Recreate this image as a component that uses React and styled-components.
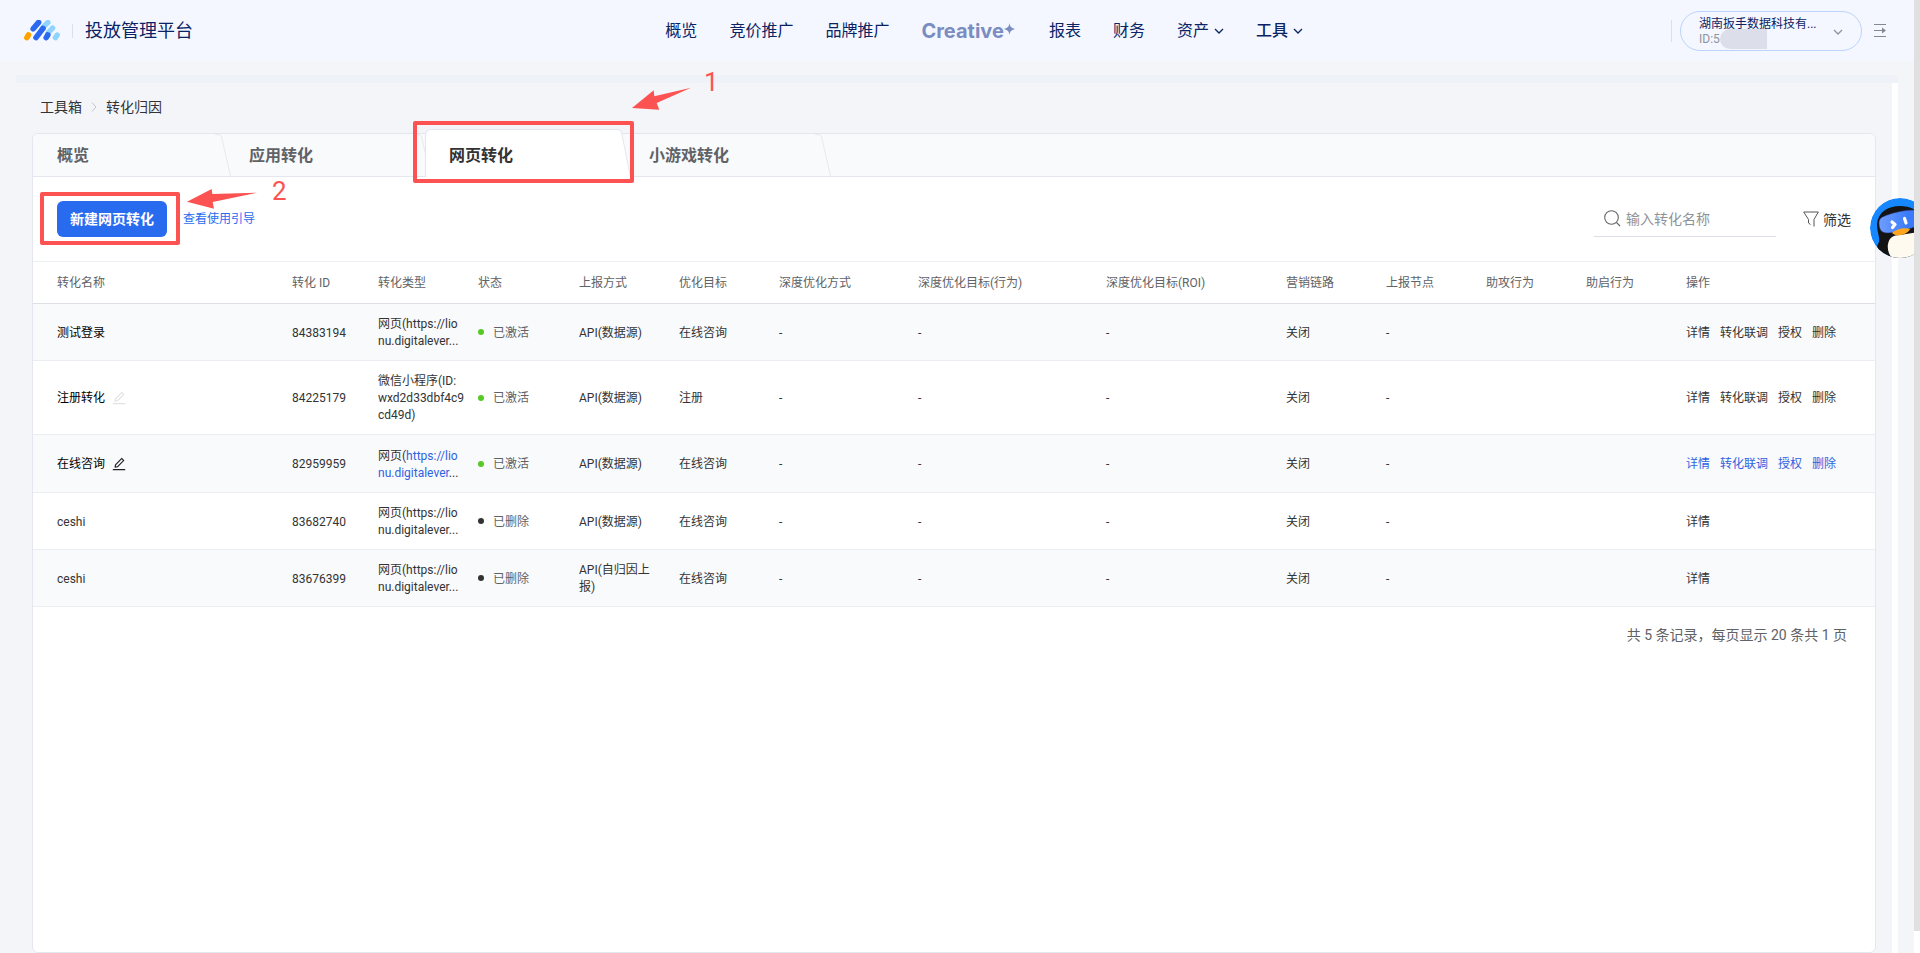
import React from "react";
import styled, { createGlobalStyle, css } from "styled-components";
import { AiOutlineEdit } from "react-icons/ai";

const GlobalStyle = createGlobalStyle`
  * {
    box-sizing: border-box;
  }

  body {
    margin: 0;
    background: #f4f5f8;
    color: #333;
    font-family: Roboto, "Noto Sans CJK SC", sans-serif;
    font-size: 12px;
    line-height: 17px;
  }

  button,
  input {
    font-family: inherit;
  }

  a {
    color: inherit;
    text-decoration: none;
  }
`;

const Page = styled.div`
  display: flex;
  min-height: 100vh;
  overflow-x: hidden;
`;

const Shell = styled.div`
  display: flex;
  flex: 1;
  flex-direction: column;
  min-width: 0;
`;

const ScrollTrack = styled.div`
  display: flex;
  width: 6px;
  padding-bottom: 22px;
  background: #fff;
`;

const ScrollThumb = styled.div`
  flex: 1;
  background: #e0e0e0;
`;

const Header = styled.header`
  display: grid;
  grid-template-columns: 11fr auto 10fr;
  align-items: center;
  height: 61px;
  padding: 0 28px 0 24px;
  background: #f4f7ff;
  color: #0b2364;
`;

const Brand = styled.div`
  display: flex;
  align-items: center;
  font-size: 18px;
  line-height: 24px;
`;

const Divider = styled.span`
  width: 1px;
  height: ${(props) => (props.$tall ? "22px" : "14px")};
  margin: ${(props) => (props.$tall ? "0 8px 0 0" : "0 12px")};
  background: #dcdfe6;
`;

const Nav = styled.nav`
  display: flex;
  align-items: center;
  gap: 32px;
`;

const NavLink = styled.a`
  display: flex;
  align-items: center;
  gap: 5px;
  font-size: 16px;
  line-height: 24px;
  font-weight: ${(props) => (props.$active ? 500 : 400)};
`;

const Creative = styled.a`
  display: flex;
  align-items: center;
  padding-right: 2px;
  color: #7b8dc0;
  font-family: Inter, sans-serif;
  font-size: 20px;
  font-weight: 700;
  line-height: 24px;

  svg {
    margin-bottom: 4px;
  }
`;

const HeaderRight = styled.div`
  display: flex;
  align-items: center;
  justify-content: flex-end;
`;

const Account = styled.button`
  position: relative;
  display: flex;
  align-items: center;
  justify-content: space-between;
  width: 182px;
  height: 40px;
  margin-right: 12px;
  padding: 2px 18px 0;
  border: 1px solid #bcd3fa;
  border-radius: 20px;
  background: transparent;
  color: #0b2364;
  font-size: 12px;
  line-height: 15px;
  text-align: left;
`;

const AccountId = styled.span`
  display: block;
  color: #8d929c;
`;

const IdMask = styled.span`
  position: absolute;
  top: 17px;
  left: 39px;
  width: 47px;
  height: 20px;
  border-radius: 10px 0 0 10px;
  background: rgba(217, 220, 232, 0.9);
`;

const Strip = styled.div`
  height: 8px;
  margin: 14px 16px 0;
  background: #eff2f8;
`;

const Body = styled.div`
  display: flex;
  flex: 1;
  padding-right: 16px;
`;

const InnerTrack = styled.div`
  width: 6px;
  background: #fff;
`;

const Main = styled.main`
  display: flex;
  flex: 1;
  flex-direction: column;
  min-width: 0;
  padding: 0 16px 0 32px;
`;

const Breadcrumb = styled.nav`
  display: flex;
  align-items: center;
  gap: 8px;
  height: 50px;
  padding: 0 0 2px 8px;
  font-size: 14px;
`;

const Card = styled.section`
  display: flex;
  flex: 1;
  flex-direction: column;
  border: 1px solid #e4e7ed;
  border-radius: 6px;
  background: #fff;
`;

const TabBar = styled.div`
  display: flex;
  align-items: flex-end;
  height: 43px;
  border-bottom: 1px solid #e4e7ed;
  border-radius: 6px 6px 0 0;
  background: #f9fafc;
`;

const Tab = styled.button`
  position: relative;
  display: flex;
  width: ${(props) => (props.$first ? "192px" : "200px")};
  height: 42px;
  padding: 0;
  border: none;
  background: none;
  color: #606266;
  font-size: 16px;
  font-weight: 700;
  line-height: 24px;

  ${(props) =>
    props.$active &&
    css`
      z-index: 1;
      height: 48px;
      margin-bottom: -1px;
      color: #333;
    `}
`;

const TabLabel = styled.span`
  display: flex;
  flex: 1;
  align-items: center;
  height: 100%;
  padding: 2px 0 0 24px;

  ${(props) =>
    props.$active &&
    css`
      padding: 4px 0 0 23px;
      border-top: 1px solid #e4e7ed;
      border-left: 1px solid #e4e7ed;
      border-radius: 6px 0 0 0;
      background: #fff;
    `}
`;

const TabEdge = styled.svg`
  flex: none;
  width: 16px;
  height: 100%;
  margin-right: -6px;
`;

const Toolbar = styled.div`
  display: flex;
  align-items: center;
  justify-content: space-between;
  height: 84px;
  padding: 0 24px;
`;

const ToolGroup = styled.div`
  display: flex;
  align-items: center;
  gap: ${(props) => props.$gap};
`;

const ButtonWrap = styled.div`
  position: relative;
`;

const PrimaryButton = styled.button`
  display: block;
  width: 110px;
  height: 36px;
  padding: 0 0 2px;
  border: none;
  border-radius: 6px;
  background: #296bef;
  color: #fff;
  font-size: 14px;
  font-weight: 700;
`;

const GuideLink = styled.a`
  color: #296bef;
`;

const Search = styled.label`
  display: flex;
  align-items: center;
  gap: 5px;
  width: 182px;
  height: 36px;
  padding-left: 10px;
  border-bottom: 1px solid #dcdfe6;
`;

const SearchInput = styled.input`
  flex: 1;
  min-width: 0;
  padding: 0;
  border: none;
  outline: none;
  background: none;
  font-size: 14px;

  &::placeholder {
    color: #8f9299;
  }
`;

const FilterButton = styled.button`
  display: flex;
  align-items: center;
  gap: 4px;
  padding: 0;
  border: none;
  background: none;
  color: #333;
  font-size: 14px;
`;

const Table = styled.table`
  width: 100%;
  table-layout: fixed;
  border-collapse: separate;
  border-spacing: 0;
  border-top: 1px solid #ebeef2;
`;

const Col = styled.col`
  width: ${(props) => props.$width};
`;

const Th = styled.th`
  height: 42px;
  padding: 2px 8px 0;
  border-bottom: 1px solid #dcdfe3;
  color: #606266;
  font-weight: 400;
  text-align: left;
  white-space: nowrap;

  &:first-child {
    padding-left: 24px;
  }
`;

const Td = styled.td`
  padding: 12px ${(props) => (props.$narrow ? "16px" : "4px")} 10px 8px;
  border-bottom: 1px solid #ebedf2;
  word-break: break-all;

  &:first-child {
    padding-left: 24px;
  }
`;

const Tr = styled.tr`
  height: ${(props) => (props.$active ? "58px" : "auto")};

  &:nth-child(odd) {
    background: #f9fafc;
  }
`;

const Name = styled.span`
  display: flex;
  align-items: center;
  gap: 6px;
  color: ${(props) => (props.$strong ? "#000" : "#333")};
`;

const EditButton = styled.button`
  display: flex;
  padding: 0 0 2px;
  border: none;
  background: none;
  color: ${(props) => (props.$dim ? "#e2e2e2" : "#222")};
`;

const Clamp = styled.span`
  display: block;
  white-space: nowrap;
`;

const TypeLink = styled.span`
  color: ${(props) => (props.$active ? "#2f62e0" : "inherit")};
`;

const Status = styled.span`
  display: flex;
  align-items: center;
  gap: 9px;
  color: #606266;

  &::before {
    content: "";
    width: 6px;
    height: 6px;
    margin-bottom: 2px;
    border-radius: 50%;
    background: ${(props) => (props.$live ? "#56c926" : "#333")};
  }
`;

const Actions = styled.span`
  display: flex;
  gap: 10px;
  color: ${(props) => (props.$active ? "#2f62e0" : "#333")};
  white-space: nowrap;
`;

const Pager = styled.p`
  margin: 0;
  padding: 20px 28px;
  color: #606266;
  font-size: 14px;
  text-align: right;
`;

const MarkBox = styled.span`
  position: absolute;
  inset: ${(props) => props.$inset};
  border: 4px solid #fc5252;
  border-radius: 2px;
  pointer-events: none;
`;

const MarkArrow = styled.svg`
  position: absolute;
  top: ${(props) => props.$top};
  left: ${(props) => props.$left};
  fill: #fc5252;
`;

const MarkNumber = styled.span`
  position: absolute;
  top: ${(props) => props.$top};
  left: ${(props) => props.$left};
  color: #fc5252;
  font-size: 26px;
  font-weight: 400;
  line-height: 28px;
`;

const Assistant = styled.button`
  position: fixed;
  top: 198px;
  right: 6px;
  width: 44px;
  height: 60px;
  padding: 0;
  overflow: hidden;
  border: none;
  background: none;
`;

const Logo = () => (
  <svg width="36" height="21" viewBox="0 0 36 21" fill="none" strokeWidth="5" strokeLinecap="round">
    <path d="M2.9 17.6l1.6-2.6" stroke="#ffa200" strokeWidth="5.600" />
    <path d="M18.5 8l5.4-5.6M24 13l4.6-5M31.4 17.6l1.8-2.6" stroke="#8fd3ff" strokeWidth="5.400" />
    <path d="M9.2 8.8l5.4-6.4M12 17.6l7-9.2M22.2 17.6l1.6-2.6" stroke="#2a68f0" strokeWidth="5.600" />
  </svg>
);

const Chevron = ({ color = "currentColor" }) => (
  <svg width="10" height="10" viewBox="0 0 10 10" fill="none" stroke={color} strokeWidth="1.3">
    <path d="M1 3l4 4 4-4" />
  </svg>
);

const Penguin = () => (
  <svg width="60" height="60" viewBox="0 0 60 60">
    <defs>
      <clipPath id="round">
        <circle cx="30" cy="30" r="30" />
      </clipPath>
      <linearGradient id="visor">
        <stop offset="0" stopColor="#6f9dff" />
        <stop offset="0.7" stopColor="#3b7bfa" />
      </linearGradient>
    </defs>
    <g clipPath="url(#round)">
      <circle cx="30" cy="30" r="30" fill="#1687ff" />
      <path d="M7 26C8 14 18 8 30 8s24 6 24 20v32H14C8 54 5 50 9 44c1-5-2-10-2-18z" fill="#141414" />
      <path d="M18 46c1-6 5-9 12-9l24-4v27H22c-3-3-5-9-4-14z" fill="#fffaf0" />
      <path d="M9 25c0-5 3-6 8-8 8-3 18-5 26-5 6 0 7 4 7 9s-2 7-8 9c-8 3-18 5-25 5-6 0-8-4-8-10z" fill="url(#visor)" stroke="#26305c" strokeWidth="0.6" />
      <path d="M22 24l3 2.500-2.500 3" fill="none" stroke="#fff" strokeWidth="3.2" strokeLinecap="round" strokeLinejoin="round" />
      <path d="M34.500 20.500l1.500 4.500" stroke="#fff" strokeWidth="3.2" strokeLinecap="round" />
      <path d="M22 35c4-4 13-6 18-4-2 5-13 9-18 4z" fill="#ffa51e" />
    </g>
  </svg>
);

const tabs = ["概览", "应用转化", "网页转化", "小游戏转化"];

// the name column takes what the others leave
const columns = [
  { title: "转化名称", width: "auto" },
  { title: "转化 ID", width: "86px" },
  { title: "转化类型", width: "100px" },
  { title: "状态", width: "101px" },
  { title: "上报方式", width: "100px" },
  { title: "优化目标", width: "100px" },
  { title: "深度优化方式", width: "139px" },
  { title: "深度优化目标(行为)", width: "188px" },
  { title: "深度优化目标(ROI)", width: "180px" },
  { title: "营销链路", width: "100px" },
  { title: "上报节点", width: "100px" },
  { title: "助攻行为", width: "100px" },
  { title: "助启行为", width: "100px" },
  { title: "操作", width: "197px" },
];

const fullActions = ["详情", "转化联调", "授权", "删除"];

const rows = [
  { name: "测试登录", id: "84383194", live: true, method: "API(数据源)", goal: "在线咨询", strong: true },
  {
    name: "注册转化",
    id: "84225179",
    type: "微信小程序(ID: wxd2d33dbf4c9cd49d)",
    live: true,
    method: "API(数据源)",
    goal: "注册",
    strong: true,
    edit: "dim",
  },
  {
    name: "在线咨询",
    id: "82959959",
    live: true,
    method: "API(数据源)",
    goal: "在线咨询",
    strong: true,
    edit: "on",
    active: true,
  },
  { name: "ceshi", id: "83682740", method: "API(数据源)", goal: "在线咨询" },
  { name: "ceshi", id: "83676399", method: "API(自归因上报)", goal: "在线咨询" },
];

const TypeCell = ({ row }) => {
  if (row.type) return row.type;
  return (
    <Clamp>
      网页(<TypeLink $active={row.active}>https://lio<br />nu.digitalever</TypeLink>...
    </Clamp>
  );
};

const Row = ({ row }) => (
  <Tr $active={row.active}>
    <Td>
      <Name $strong={row.strong}>
        {row.name}
        {row.edit && (
          <EditButton $dim={row.edit === "dim"} aria-label="编辑">
            <AiOutlineEdit size={16} />
          </EditButton>
        )}
      </Name>
    </Td>
    <Td>{row.id}</Td>
    <Td>
      <TypeCell row={row} />
    </Td>
    <Td>
      <Status $live={row.live}>{row.live ? "已激活" : "已删除"}</Status>
    </Td>
    <Td $narrow>{row.method}</Td>
    <Td>{row.goal}</Td>
    <Td>-</Td>
    <Td>-</Td>
    <Td>-</Td>
    <Td>关闭</Td>
    <Td>-</Td>
    <Td />
    <Td />
    <Td>
      <Actions $active={row.active}>
        {(row.live ? fullActions : ["详情"]).map((action) => (
          <a href="#" key={action}>
            {action}
          </a>
        ))}
      </Actions>
    </Td>
  </Tr>
);

const TabItem = ({ title, first, active, children }) => (
  <Tab $first={first} $active={active}>
    <TabLabel $active={active}>{title}</TabLabel>
    <TabEdge viewBox="0 0 16 48" preserveAspectRatio="none">
      {active && <path d="M0 1h2c3 0 4 1.500 4.500 4.500L15 48H0z" fill="#fff" />}
      <path
        d="M0 .5h2c3 0 4.500 1.500 5 5L15.500 48"
        fill="none"
        stroke="#e4e7ed"
      />
    </TabEdge>
    {children}
  </Tab>
);

const App = () => {
  return (
    <Page>
      <GlobalStyle />
      <Shell>
        <Header>
          <Brand>
            <Logo />
            <Divider />
            投放管理平台
          </Brand>
          <Nav>
            <NavLink href="#">概览</NavLink>
            <NavLink href="#">竞价推广</NavLink>
            <NavLink href="#">品牌推广</NavLink>
            <Creative href="#">
              Creative
              <svg width="11" height="12" viewBox="0 0 11 12" fill="currentColor">
                <path d="M5.500 0c.6 3.600 1.600 4.800 5.500 6-3.900 1.200-4.900 2.400-5.500 6-.6-3.600-1.600-4.800-5.500-6 3.900-1.200 4.900-2.400 5.500-6z" />
              </svg>
            </Creative>
            <NavLink href="#">报表</NavLink>
            <NavLink href="#">财务</NavLink>
            <NavLink href="#">
              资产
              <Chevron />
            </NavLink>
            <NavLink href="#" $active>
              工具
              <Chevron />
            </NavLink>
          </Nav>
          <HeaderRight>
            <Divider $tall />
            <Account>
              <span>
                湖南扳手数据科技有...
                <AccountId>ID:5</AccountId>
              </span>
              <IdMask />
              <Chevron color="#8d929c" />
            </Account>
            <svg width="12" height="13" viewBox="0 0 12 13" fill="none" stroke="#85888f">
              <path d="M0 .5h12M0 6.500h8M0 12.500h12" />
              <path d="M8 3.500l4 3-4 3z" fill="#85888f" stroke="none" />
            </svg>
          </HeaderRight>
        </Header>
        <Strip />
        <Body>
          <Main>
            <Breadcrumb>
              <a href="#">工具箱</a>
              <svg width="8" height="10" viewBox="0 0 8 10" fill="none" stroke="#c0c4cc">
                <path d="M2 .5l4 4.500-4 4.500" />
              </svg>
              <span>转化归因</span>
            </Breadcrumb>
            <Card>
              <TabBar>
                {tabs.map((title, i) => (
                  <TabItem key={title} title={title} first={i === 0} active={i === 2}>
                    {i === 2 && (
                      <>
                        <MarkBox $inset="-8px -9px -6px -12px" />
                        <MarkArrow $top="-42px" $left="206px" width="62" height="24" viewBox="0 0 62 24">
                          <path d="M1 21L22.700 3.300l.6 6L60 .8 25.700 16l2.600 6.700z" />
                        </MarkArrow>
                        <MarkNumber $top="-61px" $left="279px">
                          1
                        </MarkNumber>
                      </>
                    )}
                  </TabItem>
                ))}
              </TabBar>
              <Toolbar>
                <ToolGroup $gap="16px">
                  <ButtonWrap>
                    <PrimaryButton>新建网页转化</PrimaryButton>
                    <MarkBox $inset="-9px -13px -8px -17px" />
                    <MarkArrow $top="-13px" $left="129px" width="72" height="22" viewBox="0 0 72 22">
                      <path d="M1 13.700L25.700 1l.6 5L71 4.700 26.700 14l1.300 6.700z" />
                    </MarkArrow>
                    <MarkNumber $top="-24px" $left="215px">
                      2
                    </MarkNumber>
                  </ButtonWrap>
                  <GuideLink href="#">查看使用引导</GuideLink>
                </ToolGroup>
                <ToolGroup $gap="27px">
                  <Search>
                    <svg width="17" height="17" viewBox="0 0 17 17" fill="none" stroke="#666" strokeWidth="1.1">
                      <circle cx="7.500" cy="7.500" r="6.800" />
                      <path d="M12.500 12.500l3.500 3.500" />
                    </svg>
                    <SearchInput placeholder="输入转化名称" aria-label="输入转化名称" />
                  </Search>
                  <FilterButton>
                    <svg width="16" height="16" viewBox="0 0 16 16" fill="none" stroke="#555">
                      <path d="M11 15.500V8.500L15.300 1H.7L5.500 8.500v3.500l2 1.500" />
                    </svg>
                    筛选
                  </FilterButton>
                </ToolGroup>
              </Toolbar>
              <Table>
                <colgroup>
                  {columns.map((column) => (
                    <Col key={column.title} $width={column.width} />
                  ))}
                </colgroup>
                <thead>
                  <tr>
                    {columns.map((column) => (
                      <Th key={column.title}>{column.title}</Th>
                    ))}
                  </tr>
                </thead>
                <tbody>
                  {rows.map((row) => (
                    <Row key={row.id} row={row} />
                  ))}
                </tbody>
              </Table>
              <Pager>共 5 条记录，每页显示 20 条共 1 页</Pager>
            </Card>
          </Main>
          <InnerTrack />
        </Body>
      </Shell>
      <ScrollTrack>
        <ScrollThumb />
      </ScrollTrack>
      <Assistant aria-label="智能助手">
        <Penguin />
      </Assistant>
    </Page>
  );
};

export default App;
